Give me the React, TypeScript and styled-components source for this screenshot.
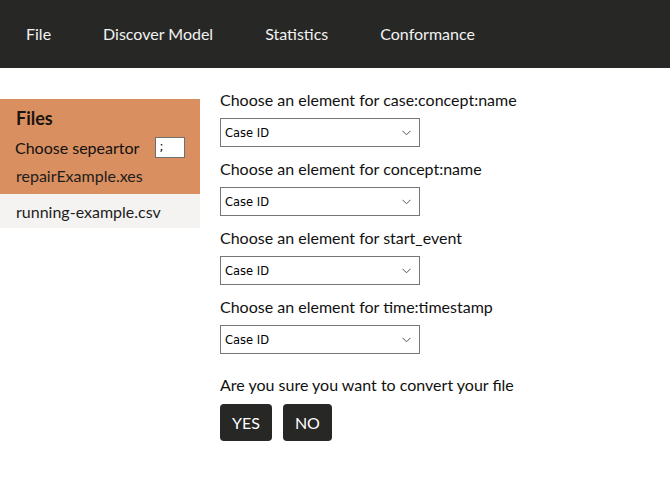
import React from "react";
import styled, { createGlobalStyle } from "styled-components";

const Global = createGlobalStyle`
  body { margin: 0; background: #fff; font-family: Lato, "Open Sans", sans-serif; color: #111; }
`;

const Nav = styled.nav`
  height: 68px;
  box-sizing: border-box;
  padding-bottom: 2px;
  background: #272826;
  display: flex;
  align-items: center;
`;

const NavItem = styled.div`
  color: #f2f2f2;
  font-size: 16px;
  padding: 0 26px;
`;

const Body = styled.div`
  display: flex;
  gap: 20px;
  padding-top: 22px;
`;

const Sidebar = styled.aside`
  width: 200px;
  margin-top: 9px;
  display: flex;
  flex-direction: column;
`;

const SideTop = styled.div`
  background: #d98f5f;
  padding: 7px 0 4px 16px;
  display: flex;
  flex-direction: column;
`;

const Title = styled.div`
  font-weight: 700;
  font-size: 18px;
  color: #1a1410;
  height: 26px;
  line-height: 24px;
`;

const SepRow = styled.div`
  display: flex;
  align-items: center;
  height: 30px;
  font-size: 16px;
  margin-left: -1px;
`;

const SepInput = styled.input`
  width: 30px;
  height: 21px;
  box-sizing: border-box;
  margin-left: 16px;
  border: 1px solid #6f6f6f;
  padding: 0 3px;
  font-size: 12px;
  font-family: "DejaVu Sans", sans-serif;
`;

const FileRow = styled.div<{ $active?: boolean }>`
  font-size: 16px;
  height: ${(p) => (p.$active ? "28px" : "34px")};
  line-height: ${(p) => (p.$active ? "28px" : "35px")};
  background: ${(p) => (p.$active ? "transparent" : "#f4f3f2")};
  padding-left: ${(p) => (p.$active ? "0" : "16px")};
  color: #1d1d1d;
`;

const Main = styled.main`
  display: flex;
  flex-direction: column;
`;

const Group = styled.div`
  display: flex;
  flex-direction: column;
  height: 69px;
`;

const Label = styled.div`
  font-size: 16px;
  height: 20px;
  line-height: 20px;
  color: #111;
`;

const SelectBox = styled.div`
  margin-top: 8px;
  width: 200px;
  height: 29px;
  box-sizing: border-box;
  border: 1px solid #767676;
  display: flex;
  align-items: center;
  justify-content: space-between;
  padding: 0 8px 0 4px;
  font-family: "DejaVu Sans", sans-serif;
  font-size: 11.5px;
  color: #000;
  background: #fff;
`;

const Confirm = styled.div`
  margin-top: 9px;
  font-size: 16px;
  line-height: 20px;
`;

const Buttons = styled.div`
  display: flex;
  gap: 11px;
  margin-top: 9px;
`;

const Btn = styled.button`
  background: #272826;
  color: #fff;
  border: none;
  border-radius: 4px;
  height: 37px;
  padding: 0 12px;
  font-family: Lato, sans-serif;
  font-size: 16px;
`;

const Chevron = () => (
  <svg width="9" height="6" viewBox="0 0 9 6">
    <path d="M0.5 0.8 L4.5 4.8 L8.5 0.8" fill="none" stroke="#555" strokeWidth="1" />
  </svg>
);

const fields = ["case:concept:name", "concept:name", "start_event", "time:timestamp"];

export default function App() {
  return (
    <>
      <Global />
      <Nav>
        <NavItem>File</NavItem>
        <NavItem>Discover Model</NavItem>
        <NavItem>Statistics</NavItem>
        <NavItem>Conformance</NavItem>
      </Nav>
      <Body>
        <Sidebar>
          <SideTop>
            <Title>Files</Title>
            <SepRow>
              Choose sepeartor
              <SepInput defaultValue=";" />
            </SepRow>
            <FileRow $active>repairExample.xes</FileRow>
          </SideTop>
          <FileRow>running-example.csv</FileRow>
        </Sidebar>
        <Main>
          {fields.map((f) => (
            <Group key={f}>
              <Label>Choose an element for {f}</Label>
              <SelectBox>
                <span>Case ID</span>
                <Chevron />
              </SelectBox>
            </Group>
          ))}
          <Confirm>Are you sure you want to convert your file</Confirm>
          <Buttons>
            <Btn>YES</Btn>
            <Btn>NO</Btn>
          </Buttons>
        </Main>
      </Body>
    </>
  );
}
